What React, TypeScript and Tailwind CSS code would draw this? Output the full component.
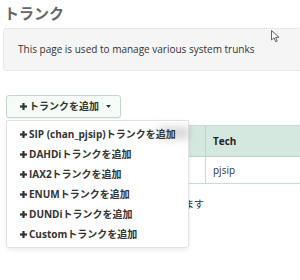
import React from "react";

const font = { fontFamily: '"Open Sans", "Noto Sans CJK JP", sans-serif' };

function Plus({ size = 7 }: { size?: number }) {
  return (
    <svg width={size} height={size} viewBox="0 0 7 7" className="shrink-0">
      <rect x="2.4" y="0" width="2.2" height="7" fill="currentColor" />
      <rect x="0" y="2.4" width="7" height="2.2" fill="currentColor" />
    </svg>
  );
}

const items = [
  "SIP (chan_pjsip)トランクを追加",
  "DAHDiトランクを追加",
  "IAX2トランクを追加",
  "ENUMトランクを追加",
  "DUNDiトランクを追加",
  "Customトランクを追加",
];

export default function App() {
  return (
    <div
      className="relative w-[300px] h-[280px] overflow-hidden bg-white text-[#333]"
      style={font}
    >
      <div className="pl-[4px] pt-[1px] text-[15px] leading-[24px] font-bold text-[#666]">
        トランク
      </div>
      <div className="ml-[3px] mt-[3px] w-[310px] h-[43px] flex items-center pl-[14px] bg-[#f5f5f5] border border-dotted border-[#dcdcdc] rounded-[3px] text-[10px] whitespace-nowrap text-[#333]">
        This page is used to manage various system trunks
      </div>
      <div className="ml-[6px] mt-[24px] w-[115px] h-[23px] flex items-center gap-[2px] pl-[13px] border border-[#c3d6cb] rounded-[3px] bg-[#f7fbf8] text-[10px] font-bold text-[#2a3a30] shadow-[0_1px_1px_rgba(0,0,0,0.05)] whitespace-nowrap">
        <Plus size={7} />
        <span>トランクを追加</span>
        <svg width="5" height="3" viewBox="0 0 5 3" className="ml-[5px]">
          <path d="M0 0 H5 L2.5 3 Z" fill="currentColor" />
        </svg>
      </div>
      <div className="ml-[6px] mt-[7px] w-[320px] border-t border-[#c6ddd1]">
        <div className="flex h-[31px] bg-[#d5e8df] border-b border-[#b8d6c7] text-[10px] font-bold text-[#222]">
          <div className="w-[200px] border-r border-[#b8d6c7]" />
          <div className="flex items-center pl-[7px]">Tech</div>
        </div>
        <div className="flex h-[27px] border-b border-[#c6ddd1] text-[10px] text-[#333]">
          <div className="w-[200px] border-r border-[#c6ddd1]" />
          <div className="flex items-center pl-[7px]">pjsip</div>
        </div>
      </div>
      <div className="mt-[13px] w-[204px] text-right text-[10px] leading-[14px] text-[#333] whitespace-nowrap">
        1 件中 1 から 1 まで表示します
      </div>

      <div className="absolute left-[6px] top-[120px] w-[183px] h-[128px] bg-white border border-[#e2e2e2] rounded-b-[3px] shadow-[0_2px_4px_rgba(0,0,0,0.08)] pt-[3px]">
        <div className="absolute left-[150px] top-[6px] w-[34px] h-[12px] rounded-full bg-[#bbb] blur-[4px] opacity-60" />
        {items.map((t) => (
          <div
            key={t}
            className="relative flex items-center gap-[2px] h-[20px] pl-[13px] text-[10px] font-bold text-[#333] whitespace-nowrap"
          >
            <Plus />
            <span>{t}</span>
          </div>
        ))}
      </div>

      <svg
        className="absolute left-[271px] top-[30px]"
        width="9"
        height="13"
        viewBox="0 0 9 13"
      >
        <path
          d="M0.5 0.5 L0.5 10 L3 7.8 L4.8 11.8 L6.3 11.1 L4.6 7.3 L8 7.3 Z"
          fill="white"
          stroke="#555"
          strokeWidth="0.9"
        />
      </svg>
    </div>
  );
}
